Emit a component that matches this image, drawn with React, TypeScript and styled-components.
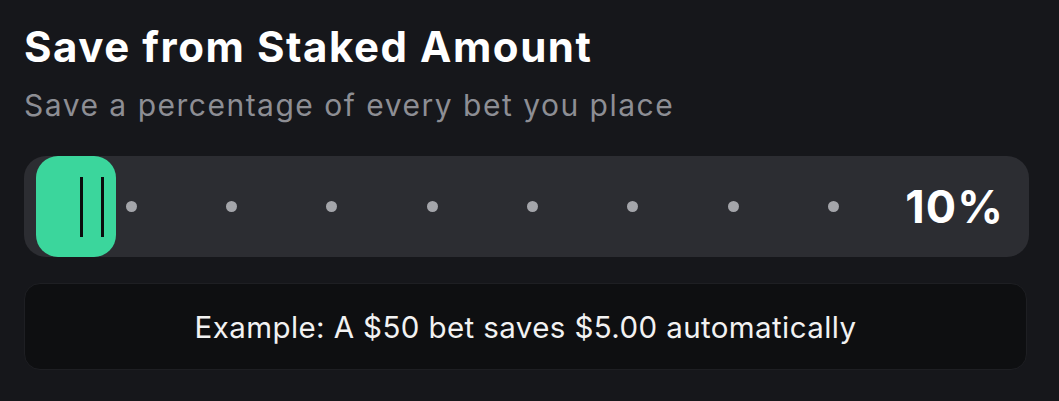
import React from "react";
import styled, { createGlobalStyle } from "styled-components";

const Global = createGlobalStyle`
  html, body { margin: 0; padding: 0; background: #16171b; }
  body { font-family: Inter, "Noto Sans", sans-serif; -webkit-font-smoothing: antialiased; }
`;

const Panel = styled.div`
  width: 1059px;
  height: 401px;
  box-sizing: border-box;
  padding: 26px 30px 0 24px;
  background: #16171b;
  display: flex;
  flex-direction: column;
`;

const Title = styled.h1`
  margin: 0;
  font-size: 42px;
  line-height: 42px;
  font-weight: 700;
  color: #ffffff;
  letter-spacing: 1.55px;
`;

const Subtitle = styled.p`
  margin: 22px 0 0;
  font-size: 30px;
  line-height: 31px;
  font-weight: 400;
  color: #8d8e94;
  letter-spacing: 1.5px;
`;

const Track = styled.div`
  margin-top: 35px;
  height: 101px;
  border-radius: 22px;
  background: #2c2d32;
  display: flex;
  align-items: center;
  padding: 0 26px 0 12px;
`;

const Thumb = styled.div`
  width: 80px;
  height: 101px;
  border-radius: 22px;
  background: #3bd69c;
  display: flex;
  align-items: center;
  justify-content: flex-end;
  gap: 18px;
  padding-right: 12px;
  box-sizing: border-box;
  flex-shrink: 0;
`;

const Grip = styled.span`
  width: 3px;
  height: 60px;
  background: #0b0c0d;
`;

const Dots = styled.div`
  display: flex;
  align-items: center;
  gap: 89.4px;
  margin-left: 9.5px;
`;

const Dot = styled.span`
  width: 11px;
  height: 11px;
  border-radius: 50%;
  background: #a4a5aa;
`;

const Value = styled.span`
  margin-left: auto;
  font-size: 45px;
  line-height: 45px;
  font-weight: 700;
  color: #ffffff;
  letter-spacing: 1.2px;
  margin-right: -1.2px;
`;

const Example = styled.div`
  margin-top: 26px;
  margin-right: 2px;
  height: 87px;
  box-sizing: border-box;
  border: 1px solid #1e1f23;
  border-radius: 16px;
  background: #0e0f11;
  display: flex;
  align-items: center;
  justify-content: center;
  font-size: 29.5px;
  letter-spacing: 0.4px;
  color: #f2f2f2;
`;

export default function App() {
  return (
    <>
      <Global />
      <Panel>
        <Title>Save from Staked Amount</Title>
        <Subtitle>Save a percentage of every bet you place</Subtitle>
        <Track>
          <Thumb>
            <Grip />
            <Grip />
          </Thumb>
          <Dots>
            {Array.from({ length: 8 }).map((_, i) => (
              <Dot key={i} />
            ))}
          </Dots>
          <Value>10%</Value>
        </Track>
        <Example>Example: A $50 bet saves $5.00 automatically</Example>
      </Panel>
    </>
  );
}
